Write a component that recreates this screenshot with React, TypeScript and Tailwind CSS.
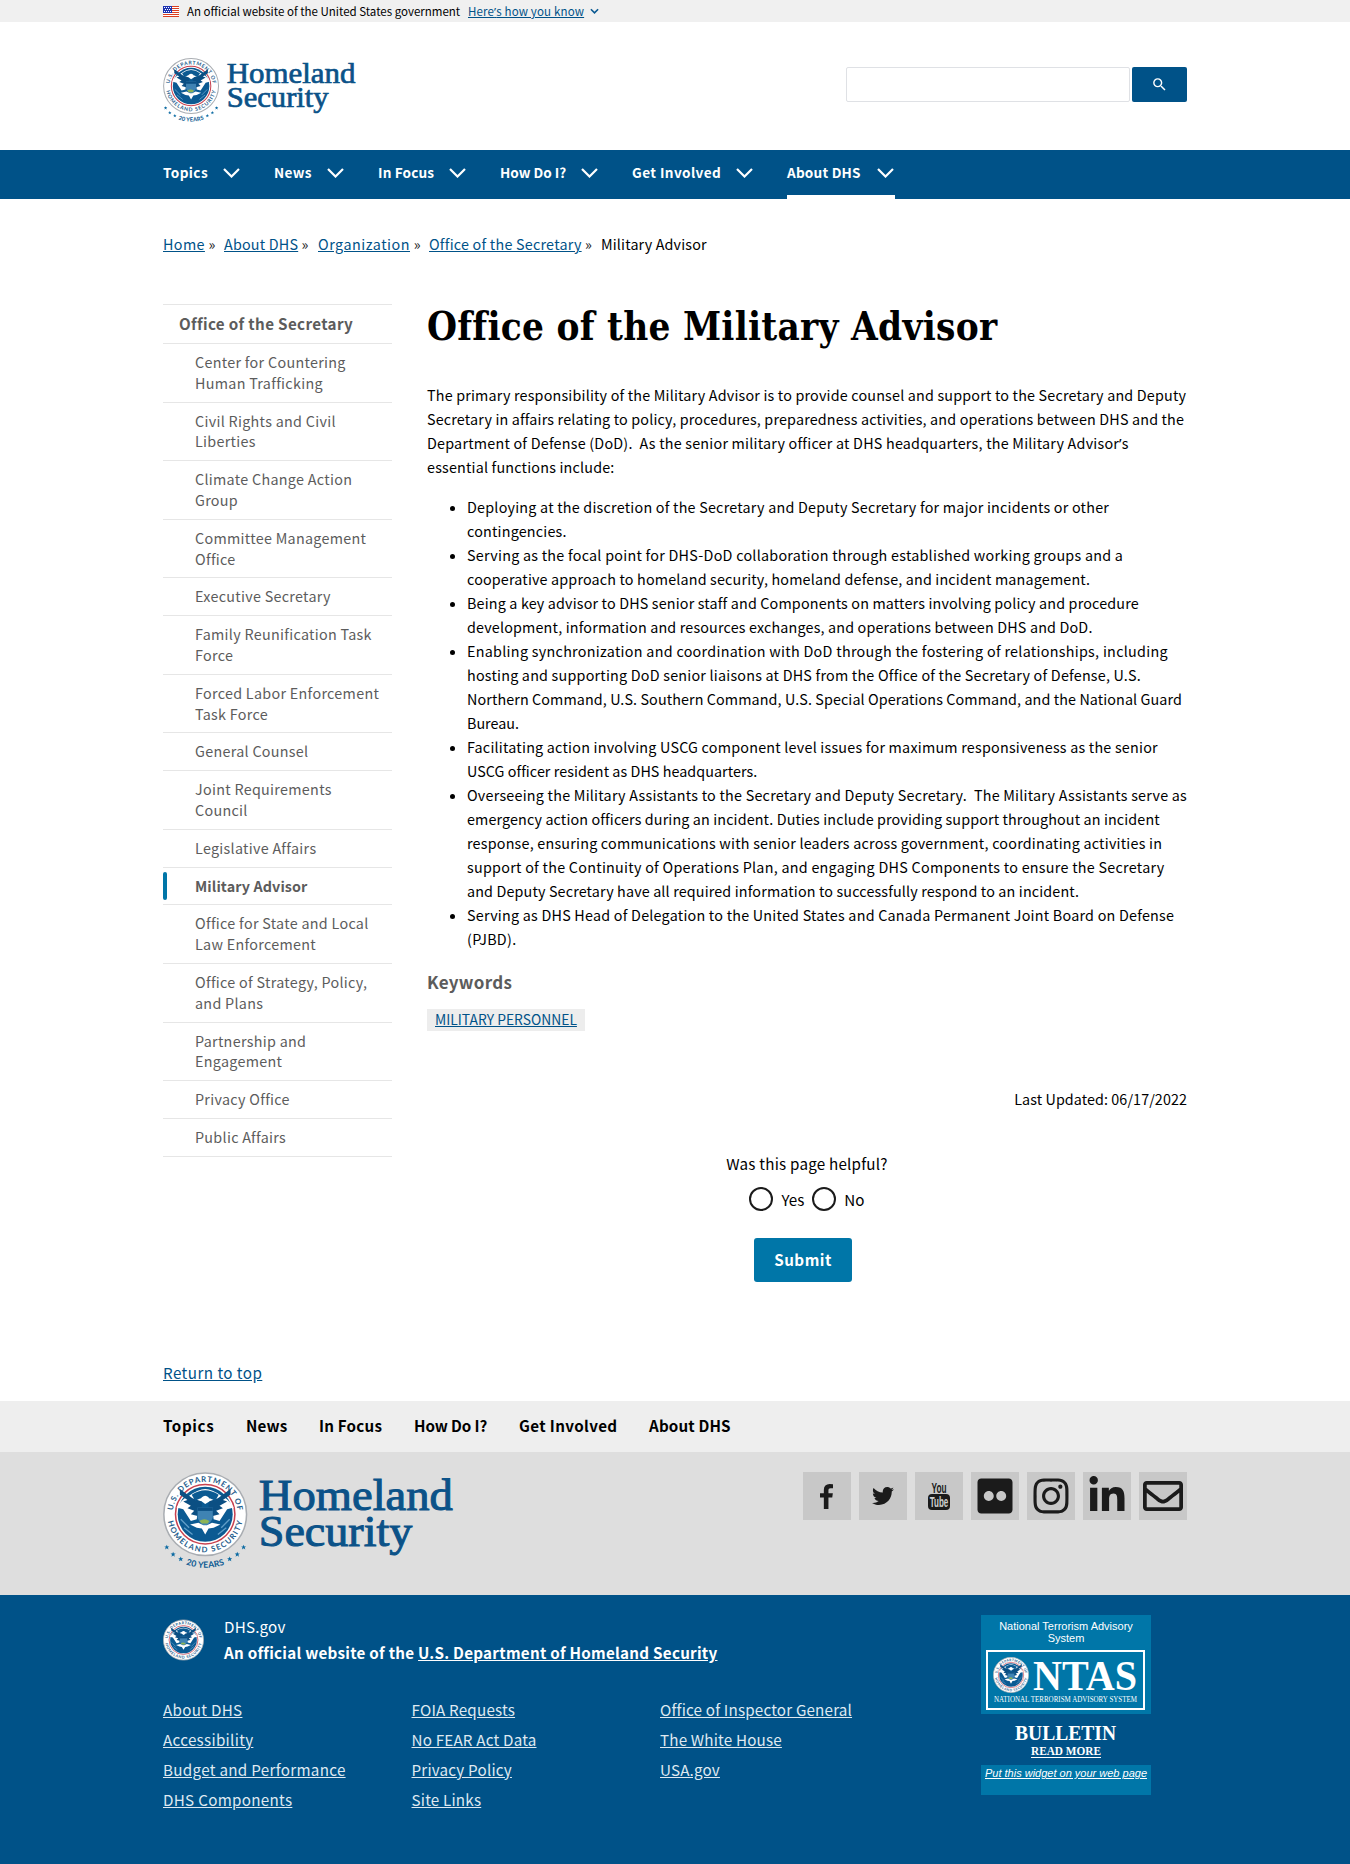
import { FaTwitter, FaFlickr, FaInstagram, FaLinkedinIn, FaRegEnvelope } from 'react-icons/fa';
import { MdSearch } from 'react-icons/md';

const navItems = ['Topics', 'News', 'In Focus', 'How Do I?', 'Get Involved', 'About DHS'];

const navWidths = [
  'w-[77px] tracking-[0.4px]',
  'w-[70px] tracking-[0.3px]',
  'w-[88px] tracking-[0.15px]',
  'w-[98px]',
  'w-[121px] tracking-[0.4px]',
  'w-[108px] tracking-[0.2px]',
];

const footerNavWidths = [
  'w-[83px] tracking-[0.6px]',
  'w-[73px] tracking-[0.15px]',
  'w-[95px] tracking-[0.2px]',
  'w-[105px] tracking-[-0.1px]',
  'w-[130px] tracking-[0.35px]',
  'w-[84px] tracking-[0.15px]',
];

const crumbs = [
  { label: 'Home', width: 'w-[61px] tracking-[0.4px]' },
  { label: 'About DHS', width: 'w-[94px] tracking-[0.2px]' },
  { label: 'Organization', width: 'w-[111px] tracking-[0.53px]' },
  { label: 'Office of the Secretary', width: 'w-[172px] tracking-[0.23px]' },
];

const sideItems = [
  ['Center for Countering', 'Human Trafficking'],
  ['Civil Rights and Civil', 'Liberties'],
  ['Climate Change Action', 'Group'],
  ['Committee Management', 'Office'],
  ['Executive Secretary'],
  ['Family Reunification Task', 'Force'],
  ['Forced Labor Enforcement', 'Task Force'],
  ['General Counsel'],
  ['Joint Requirements', 'Council'],
  ['Legislative Affairs'],
  ['Military Advisor'],
  ['Office for State and Local', 'Law Enforcement'],
  ['Office of Strategy, Policy,', 'and Plans'],
  ['Partnership and', 'Engagement'],
  ['Privacy Office'],
  ['Public Affairs'],
];

type Line = [text: string, tracking: string];

const intro: Line[] = [
  ['The primary responsibility of the Military Advisor is to provide counsel and support to the Secretary and Deputy', 'tracking-[0.185px]'],
  ['Secretary in affairs relating to policy, procedures, preparedness activities, and operations between DHS and the', 'tracking-[0.165px]'],
  ['Department of Defense (DoD).\u00a0 As the senior military officer at DHS headquarters, the Military Advisor’s', 'tracking-[0.22px]'],
  ['essential functions include:', 'tracking-[0.19px]'],
];

const duties: Line[][] = [
  [
    ['Deploying at the discretion of the Secretary and Deputy Secretary for major incidents or other', 'tracking-[0.225px]'],
    ['contingencies.', 'tracking-[0.2px]'],
  ],
  [
    ['Serving as the focal point for DHS-DoD collaboration through established working groups and a', 'tracking-[0.255px]'],
    ['cooperative approach to homeland security, homeland defense, and incident management.', 'tracking-[0.165px]'],
  ],
  [
    ['Being a key advisor to DHS senior staff and Components on matters involving policy and procedure', 'tracking-[0.16px]'],
    ['development, information and resources exchanges, and operations between DHS and DoD.', 'tracking-[0.165px]'],
  ],
  [
    ['Enabling synchronization and coordination with DoD through the fostering of relationships, including', 'tracking-[0.29px]'],
    ['hosting and supporting DoD senior liaisons at DHS from the Office of the Secretary of Defense, U.S.', 'tracking-[0.215px]'],
    ['Northern Command, U.S. Southern Command, U.S. Special Operations Command, and the National Guard', 'tracking-[0.1px]'],
    ['Bureau.', 'tracking-normal'],
  ],
  [
    ['Facilitating action involving USCG component level issues for maximum responsiveness as the senior', 'tracking-[0.22px]'],
    ['USCG officer resident as DHS headquarters.', 'tracking-[0.05px]'],
  ],
  [
    ['Overseeing the Military Assistants to the Secretary and Deputy Secretary.\u00a0 The Military Assistants serve as', 'tracking-[0.235px]'],
    ['emergency action officers during an incident. Duties include providing support throughout an incident', 'tracking-[0.125px]'],
    ['response, ensuring communications with senior leaders across government, coordinating activities in', 'tracking-[0.215px]'],
    ['support of the Continuity of Operations Plan, and engaging DHS Components to ensure the Secretary', 'tracking-[0.27px]'],
    ['and Deputy Secretary have all required information to successfully respond to an incident.', 'tracking-[0.145px]'],
  ],
  [
    ['Serving as DHS Head of Delegation to the United States and Canada Permanent Joint Board on Defense', 'tracking-[0.23px]'],
    ['(PJBD).', 'tracking-[0.3px]'],
  ],
];

const footerLinks = [
  ['About DHS', 'Accessibility', 'Budget and Performance', 'DHS Components'],
  ['FOIA Requests', 'No FEAR Act Data', 'Privacy Policy', 'Site Links'],
  ['Office of Inspector General', 'The White House', 'USA.gov'],
];

const footerLinkTracking = ['tracking-[0.3px]', 'tracking-[0.2px]', 'tracking-[0.18px]'];

/* The CJK face draws a full-width apostrophe, so that one glyph comes from Noto Sans. */
function Prose({ text }: { text: string }) {
  const [before, after] = text.split('’');
  if (after === undefined) return <>{text}</>;
  return (
    <>
      {before}
      <span className="font-['Noto_Sans',sans-serif] leading-none">’</span>
      {after}
    </>
  );
}

function Lines({ lines }: { lines: Line[] }) {
  return (
    <div>
      {lines.map(([text, tracking]) => (
        <div key={text} className={`h-6 ${tracking}`}>
          <Prose text={text} />
        </div>
      ))}
    </div>
  );
}

function SealArt({ id }: { id: string }) {
  return (
    <g>
      <defs>
        <path id={`${id}-top`} d="M 11.5 50 A 38.5 38.5 0 0 1 88.5 50" />
        <path id={`${id}-bottom`} d="M 5 50 A 45 45 0 0 0 95 50" />
      </defs>
      <circle cx="50" cy="50" r="49" fill="#ffffff" stroke="#a9adb2" strokeWidth="1.8" />
      <circle cx="50" cy="50" r="35.2" fill="#ffffff" stroke="#c8414f" strokeWidth="1.8" />
      <circle cx="50" cy="50" r="32.6" fill="#0b5a92" />
      <text fontSize="9.2" fill="#1d5c8c" fontFamily="Lato, sans-serif" fontWeight="700">
        <textPath href={`#${id}-top`} startOffset="50%" textAnchor="middle" textLength="112">
          U.S. DEPARTMENT OF
        </textPath>
      </text>
      <text fontSize="9.2" fill="#1d5c8c" fontFamily="Lato, sans-serif" fontWeight="700">
        <textPath href={`#${id}-bottom`} startOffset="50%" textAnchor="middle" textLength="124">
          HOMELAND SECURITY
        </textPath>
      </text>
      <path d="M16 42 Q22 32 31 28 Q42 20 50 20 Q58 20 69 28 Q78 32 84 42 L76 44 L67 58 L60 56 L58 36 Q50 30 42 36 L40 56 L33 58 L24 44 Z" fill="#ffffff" />
      <path d="M20 20 L35 31 L46 35 L46 44 L41 52 L33 50 L37 46 L29 43 L33 40 L24 35 L29 33 L20 27 Z" fill="#0b4f83" />
      <path d="M80 20 L65 31 L54 35 L54 44 L59 52 L67 50 L63 46 L71 43 L67 40 L76 35 L71 33 L80 27 Z" fill="#0b4f83" />
      <path d="M34 27 Q50 16 66 27 L62 34 Q50 27 38 34 Z" fill="#0b5a92" />
      <path d="M46 30 Q50 26 54 30 L55 35 L50 38 L46 35 L44 33 Z" fill="#ffffff" />
      <path d="M41 42 L59 42 L59 54 Q57 61 50 64 Q43 61 41 54 Z" fill="#3f83b3" />
      <path d="M41 42 H59 V46 H41 Z" fill="#0b4f83" />
      <path d="M43 58 Q49 54 55 58 L53 61 L46 61 Z" fill="#8db455" />
      <path d="M32 62 L42 60 L48 63 L52 63 L58 60 L68 62 L60 66 L54 67 L50 74 L46 67 L40 66 Z" fill="#ffffff" />
      <path d="M21 56 L31 66 M25 66 L35 74 M79 56 L69 66 M75 66 L65 74" stroke="#5f9dc7" strokeWidth="1.6" />
    </g>
  );
}

function Seal({ id, className }: { id: string; className: string }) {
  return (
    <svg viewBox="0 0 100 100" className={className} aria-hidden="true">
      <SealArt id={id} />
    </svg>
  );
}

const stars = [
  [4.5, 89],
  [12, 97.5],
  [21, 103],
  [95.5, 89],
  [88, 97.5],
  [79, 103],
];

function DhsLogo({ id, className }: { id: string; className: string }) {
  return (
    <svg viewBox="0 0 346 116" className={className} role="img" aria-label="Homeland Security">
      <SealArt id={id} />
      <defs>
        <path id={`${id}-years`} d="M 18 106 Q 50 121 82 106" />
      </defs>
      {stars.map(([cx, cy]) => (
        <path
          key={`${cx}-${cy}`}
          transform={`translate(${cx} ${cy})`}
          d="M0 -3 L0.9 -0.9 L3 -0.9 L1.3 0.5 L2 2.8 L0 1.4 L-2 2.8 L-1.3 0.5 L-3 -0.9 L-0.9 -0.9 Z"
          fill="#0b6aa2"
        />
      ))}
      <text fontSize="10.2" fontWeight="700" fill="#0b5a92" fontFamily="Lato, sans-serif">
        <textPath href={`#${id}-years`} startOffset="50%" textAnchor="middle" textLength="47">
          20 YEARS
        </textPath>
      </text>
      <g fill="#0b5288" stroke="#0b5288" strokeWidth="1.2" fontFamily="Liberation Serif, serif">
        <text x="113.5" y="44.5" fontSize="51.5" textLength="230" lengthAdjust="spacingAndGlyphs">
          Homeland
        </text>
        <text x="113.5" y="87.5" fontSize="52" textLength="182" lengthAdjust="spacingAndGlyphs">
          Security
        </text>
      </g>
    </svg>
  );
}

function Flag() {
  return (
    <svg viewBox="0 0 16 11" className="h-[11px] w-4" aria-hidden="true">
      <path fill="#ffffff" d="M0 0h16v11H0z" />
      <path fill="#db3e1f" d="M0 0h16v1H0zM0 2h16v1H0zM0 4h16v1H0zM0 6h16v1H0zM0 8h16v1H0zM0 10h16v1H0z" />
      <path fill="#1e33b1" d="M0 0h9v7H0z" />
      <path fill="#ffffff" d="M1 1h1v1H1zM3 1h1v1H3zM5 1h1v1H5zM7 1h1v1H7zM2 3h1v1H2zM4 3h1v1H4zM6 3h1v1H6zM1 5h1v1H1zM3 5h1v1H3zM5 5h1v1H5zM7 5h1v1H7z" />
    </svg>
  );
}

function FacebookGlyph() {
  return (
    <svg viewBox="479 0 864 1664" className="mr-px h-[25px] w-[13px]" fill="currentColor" aria-label="Facebook">
      <path d="M1343 12v264h-157q-86 0-116 36t-30 108v189h293l-39 296h-254v759h-306v-759h-255v-296h255v-218q0-186 104-288.5t277-102.5q147 0 228 12z" />
    </svg>
  );
}

function YouTubeStacked() {
  return (
    <svg viewBox="0 0 24 32" className="h-[32px] w-[24px] overflow-visible" aria-label="YouTube">
      <rect x="1" y="14" width="22" height="16" rx="4" fill="#1b1b1b" />
      <text x="4.5" y="12.5" fontSize="14" fontWeight="700" fill="#1b1b1b" fontFamily="Liberation Sans, sans-serif" textLength="15" lengthAdjust="spacingAndGlyphs">
        You
      </text>
      <text x="2.8" y="27" fontSize="14" fontWeight="700" fill="#d0d0d0" fontFamily="Liberation Sans, sans-serif" textLength="18.5" lengthAdjust="spacingAndGlyphs">
        Tube
      </text>
    </svg>
  );
}

const social = [
  <FacebookGlyph key="f" />,
  <FaTwitter key="t" className="h-[22px] w-[22px]" />,
  <YouTubeStacked key="y" />,
  <FaFlickr key="fl" className="h-[40px] w-[40px]" />,
  <FaInstagram key="i" className="h-[40px] w-[40px]" />,
  <FaLinkedinIn key="l" className="h-[40px] w-[36px]" />,
  <FaRegEnvelope key="e" className="h-[40px] w-[40px]" />,
];

export default function App() {
  return (
    <div className="min-h-[1864px] bg-white font-['Noto_Sans_CJK_SC',sans-serif] text-[14.33px] leading-6 whitespace-nowrap text-[#1b1b1b]">
      <div className="h-[22px] bg-[#f0f0f0]">
        <div className="mx-auto flex h-full w-[1024px] items-center text-[11.52px]">
          <Flag />
          <span className="ml-2 w-[281px] text-black">An official website of the United States government</span>
          <a className="tracking-[0.15px] text-[#005288] underline">
            <Prose text="Here’s how you know" />
          </a>
          <svg viewBox="0 0 10 6" className="ml-[6px] h-[6px] w-[9px]" fill="none" stroke="#0b5a92" strokeWidth="1.8">
            <path d="M1 1l4 4 4-4" />
          </svg>
        </div>
      </div>

      <header className="mx-auto flex h-[128px] w-[1024px] items-start justify-between">
        <DhsLogo id="top-seal" className="mt-[36px] h-[65px] w-[194px]" />
        <form className="mt-[45px] flex gap-[2px]">
          <div className="h-[35px] w-[284px] rounded-[2px] border border-[#dfe1e5]" />
          <button type="button" className="flex h-[35px] w-[55px] items-center justify-center rounded-[2px] bg-[#005288] text-white" aria-label="Search">
            <MdSearch className="h-[17px] w-[17px]" />
          </button>
        </form>
      </header>

      <nav className="h-[49px] bg-[#005288]">
        <ul className="mx-auto flex h-full w-[1024px] gap-[34px] text-[13.6px] font-bold text-white">
          {navItems.map((label, i) => (
            <li
              key={label}
              className={`flex h-full items-center justify-between ${navWidths[i]} ${i === 5 ? 'border-b-4 border-white pt-1 pr-px' : ''}`}
            >
              <span className="pb-[5px]">{label}</span>
              <svg viewBox="0 0 17 10" className="mb-[3px] h-[10px] w-[17px]" fill="none" stroke="currentColor" strokeWidth="2.2">
                <path d="M1 1l7.5 7.5L16 1" />
              </svg>
            </li>
          ))}
        </ul>
      </nav>

      <div className="mx-auto w-[1024px]">
        <div className="mt-[33px] flex h-6">
          {crumbs.map(({ label, width }) => (
            <span key={label} className={width}>
              <a className="text-[#005288] underline">{label}</a> »
            </span>
          ))}
          <span className="tracking-[0.15px] text-black">Military Advisor</span>
        </div>

        <div className="mt-[48px] flex h-[1057px]">
          <aside className="w-[229px] text-[#5c5c5c]">
            <div className="flex h-[39px] items-center border-t border-[#e6e6e6] pb-[2px] pl-4 text-[15.2px] font-bold tracking-[0.34px]">
              Office of the Secretary
            </div>
            <ul className="border-b border-[#e6e6e6] leading-[20.8px] tracking-[0.3px]">
              {sideItems.map((lines) => {
                const current = lines[0] === 'Military Advisor';
                return (
                  <li
                    key={lines[0]}
                    className={`relative border-t border-[#e6e6e6] pt-[8.1px] pb-[7.92px] pl-8 ${current ? 'font-bold tracking-[0.1px]' : ''}`}
                  >
                    {current && <span className="absolute top-1 bottom-1 left-0 w-1 rounded-full bg-[#0076a8]" />}
                    {lines.map((line) => (
                      <div key={line}>{line}</div>
                    ))}
                  </li>
                );
              })}
            </ul>
          </aside>

          <main className="ml-[35px] w-[760px] text-black">
            <h1 className="h-[79px] pt-px font-['DejaVu_Serif_Condensed','DejaVu_Serif',serif] text-[38.3px] leading-[44px] font-bold tracking-[0.26px]">
              Office of the Military Advisor
            </h1>
            <Lines lines={intro} />
            <ul className="mt-4 pl-[23px]">
              {duties.map((lines) => (
                <li key={lines[0][0]} className="flex gap-3">
                  <span className="mt-[11px] h-[5px] w-[5px] rounded-full bg-black" />
                  <Lines lines={lines} />
                </li>
              ))}
            </ul>
            <h2 className="mt-[19px] text-[17px] font-bold tracking-[0.3px] text-[#5c5c5c]">Keywords</h2>
            <div className="mt-[15px] flex">
              <a className="h-[22px] bg-[#ededed] px-2 text-[13.85px] leading-[20px] text-[#005288] underline">MILITARY PERSONNEL</a>
            </div>
            <div className="mt-[56px] text-right tracking-[0.08px]">Last Updated: 06/17/2022</div>
            <div className="mt-[40px] text-center text-[15.2px]">
              <div className="tracking-[0.22px]">Was this page helpful?</div>
              <div className="mt-[12px] flex items-center justify-center gap-2">
                <span className="h-6 w-6 rounded-full border-2 border-[#1b1b1b]" />
                <span>Yes</span>
                <span className="h-6 w-6 rounded-full border-2 border-[#1b1b1b]" />
                <span>No</span>
              </div>
              <button type="button" className="mt-[27px] mr-[8px] h-[44px] w-[98px] rounded-[3px] bg-[#0076a8] pb-[2px] font-bold tracking-[0.5px] text-white">
                Submit
              </button>
            </div>
          </main>
        </div>

        <div className="-mt-px h-[41px] text-[15.2px] tracking-[0.45px]">
          <a className="text-[#005288] underline">Return to top</a>
        </div>
      </div>

      <div className="h-[51px] bg-[#eeeeee]">
        <ul className="mx-auto flex h-full w-[1024px] items-center pb-[3px] text-[15.2px] font-bold text-black">
          {navItems.map((label, i) => (
            <li key={label} className={footerNavWidths[i]}>
              {label}
            </li>
          ))}
        </ul>
      </div>

      <div className="h-[143px] bg-[#dedede]">
        <div className="mx-auto flex w-[1024px] items-start justify-between pt-5">
          <DhsLogo id="footer-seal" className="h-[98px] w-[292px]" />
          <div className="flex gap-2 text-[#1b1b1b]">
            {social.map((icon, i) => (
              <a key={i} className="flex h-12 w-12 items-center justify-center bg-[#c8c8c8]">
                {icon}
              </a>
            ))}
          </div>
        </div>
      </div>

      <footer className="h-[269px] bg-[#005288] text-[15.2px] text-white">
        <div className="mx-auto flex w-[1024px] pt-5">
          <div className="-mt-0.5 w-[818px]">
            <div className="flex gap-5">
              <Seal id="small-seal" className="mt-[6px] h-[42px] w-[41px]" />
              <div className="leading-[26px]">
                <div className="tracking-[0.2px]">DHS.gov</div>
                <div className="font-bold tracking-[0.26px]">
                  An official website of the <a className="underline">U.S. Department of Homeland Security</a>
                </div>
              </div>
            </div>
            <div className="mt-[29px] flex leading-[30px]">
              {footerLinks.map((column, i) => (
                <ul key={column[0]} className={`w-[248.5px] ${footerLinkTracking[i]}`}>
                  {column.map((label) => (
                    <li key={label}>
                      <a className="text-[#dfe9f1] underline">{label}</a>
                    </li>
                  ))}
                </ul>
              ))}
            </div>
          </div>
          <div className="w-[170px] text-center font-['Liberation_Sans',sans-serif] text-[11px]">
            <div className="h-[99px] bg-[#0076a8] px-[5px] pt-[5px]">
              <div className="leading-3">
                National Terrorism Advisory
                <br />
                System
              </div>
              <svg viewBox="0 0 159 60" className="mt-[6px] h-[60px] w-[159px] overflow-visible" aria-label="NTAS">
                <rect x="1" y="1" width="157" height="58" fill="none" stroke="#ffffff" strokeWidth="2" />
                <svg x="7" y="7" width="36" height="36" viewBox="0 0 100 100">
                  <SealArt id="ntas-seal" />
                </svg>
                <text x="47" y="39.5" fontSize="42" fontWeight="700" fill="#ffffff" fontFamily="Liberation Serif, serif" textLength="104" lengthAdjust="spacingAndGlyphs">
                  NTAS
                </text>
                <text x="8" y="52" fontSize="7.5" fill="#ffffff" fontFamily="Liberation Serif, serif" textLength="143" lengthAdjust="spacingAndGlyphs">
                  NATIONAL TERRORISM ADVISORY SYSTEM
                </text>
              </svg>
            </div>
            <svg viewBox="0 0 170 51" className="h-[51px] w-[170px]" aria-label="Bulletin, read more">
              <g fill="#ffffff" fontFamily="Liberation Serif, serif" fontWeight="700">
                <text x="34" y="25.5" fontSize="21.5" textLength="101" lengthAdjust="spacingAndGlyphs">
                  BULLETIN
                </text>
                <text x="50" y="41" fontSize="13.5" textLength="70" lengthAdjust="spacingAndGlyphs">
                  READ MORE
                </text>
              </g>
              <path d="M50 43.5h70" stroke="#ffffff" strokeWidth="1" />
            </svg>
            <div className="h-[30px] bg-[#0076a8] pt-[2px] leading-3 italic underline">Put this widget on your web page</div>
          </div>
        </div>
      </footer>
    </div>
  );
}
